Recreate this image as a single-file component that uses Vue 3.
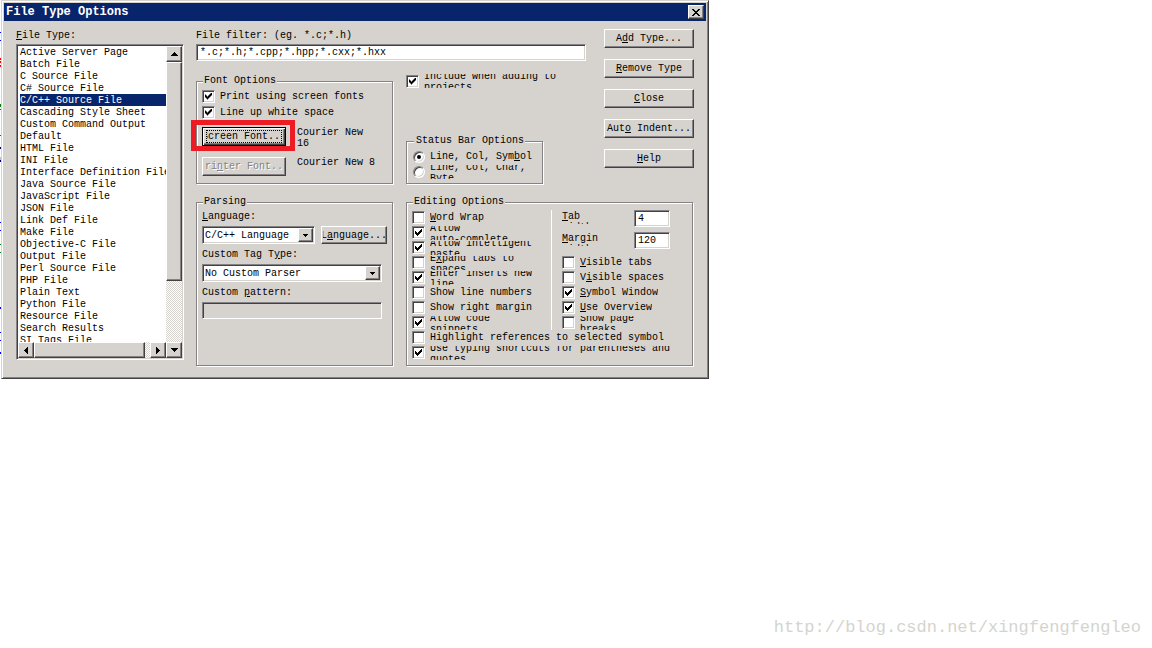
<script setup>
import { h, ref } from 'vue'

// Renders a caption: "&" precedes the access key, "|" breaks the line.
const Caption = ({ text }) =>
  h('span', { class: ['caption', { tall: text.includes('|') }] }, h('span', text.split('|').flatMap((line, i) => {
    const [before, after] = line.split('&')
    const parts = after === undefined ? [before] : [before, h('u', after[0]), after.slice(1)]
    return i ? [h('br'), ...parts] : parts
  })))
Caption.props = ['text']

const fileTypes = [
  'Active Server Page', 'Batch File', 'C Source File', 'C# Source File', 'C/C++ Source File',
  'Cascading Style Sheet', 'Custom Command Output', 'Default', 'HTML File', 'INI File',
  'Interface Definition File', 'Java Source File', 'JavaScript File', 'JSON File', 'Link Def File',
  'Make File', 'Objective-C File', 'Output File', 'Perl Source File', 'PHP File', 'Plain Text',
  'Python File', 'Resource File', 'Search Results', 'SI Tags File'
]
const fileType = ref('C/C++ Source File')
const filter = ref('*.c;*.h;*.cpp;*.hpp;*.cxx;*.hxx')
const language = ref('C/C++ Language')
const parser = ref('No Custom Parser')
const pattern = ref('')
const include = ref(true)
const status = ref('symbol')
const tabWidth = ref('4')
const marginWidth = ref('120')

const commands = ['A&dd Type...', '&Remove Type', '&Close', 'Aut&o Indent...', '&Help']
const fontChecks = ref([
  { text: 'Print using screen fonts', on: true },
  { text: 'Line up white space', on: true }
])
const statusModes = [
  { id: 'symbol', text: 'Line, Col, Sym&bol' },
  { id: 'byte', text: 'Line, Col, Char,|Byte' }
]
const editLeft = ref([
  { text: '&Word Wrap', on: false },
  { text: 'Allow|auto-complete', on: true },
  { text: 'Allow intelligent|paste', on: true },
  { text: 'E&xpand tabs to|spaces', on: false },
  { text: 'Enter inserts new|line', on: true },
  { text: 'Show line numbers', on: false },
  { text: 'Show right margin', on: false },
  { text: 'Allow code|snippets', on: true }
])
const editRight = ref([
  { text: '&Visible tabs', on: false },
  { text: 'V&isible spaces', on: false },
  { text: '&Symbol Window', on: true },
  { text: '&Use Overview', on: true },
  { text: 'Show page|breaks', on: false }
])
const editWide = ref([
  { text: 'Highlight references to selected symbol', on: false },
  { text: 'Use typing shortcuts for parentheses and|quotes', on: true }
])

// Slivers of the editor window that show past the dialog's left edge.
const slivers = [
  [32, 1, '#00f'], [40, 1, '#00f'], [58, 2, '#f00'], [61, 2, '#f00'], [65, 2, '#f00'],
  [104, 3, '#008000'], [109, 1, '#008000'], [135, 1, '#008000'], [147, 2, '#000080'],
  [157, 5, '#c0c0c0'], [160, 2, '#000080'], [222, 1, '#00f'], [230, 1, '#00f'],
  [244, 1, '#008000'], [252, 1, '#008000'], [307, 2, '#00f'], [332, 1, '#00f'],
  [340, 1, '#00f'], [352, 2, '#00f']
]
</script>

<template>
  <div class="page">
    <div class="desk">
      <svg class="slivers" width="1" height="379" aria-hidden="true" shape-rendering="crispEdges">
        <rect v-for="s in slivers" :key="s[0]" x="0" :y="s[0]" width="1" :height="s[1]" :fill="s[2]" />
      </svg>

      <main class="dialog" role="dialog" aria-labelledby="title">
        <header class="titlebar">
          <h1 id="title">File Type Options</h1>
          <button class="btn close" type="button" aria-label="Close window">
            <svg width="8" height="7" viewBox="0 0 8 7" shape-rendering="crispEdges">
              <path d="M0 0h2v1h1v1h2v-1h1v-1h2v1h-1v1h-1v1h-1v1h1v1h1v1h1v1h-2v-1h-1v-1h-2v1h-1v1h-2v-1h1v-1h1v-1h1v-1h-1v-1h-1v-1h-1z" />
            </svg>
          </button>
        </header>

        <div class="body">
          <section class="types">
            <label for="types"><Caption text="&File Type:" /></label>
            <div class="listbox sunken">
              <select id="types" v-model="fileType" size="25">
                <option v-for="t in fileTypes" :key="t" :value="t">{{ t }}</option>
              </select>
              <div class="vbar">
                <button class="btn arrow" type="button" aria-label="Scroll up">
                  <svg width="7" height="4" shape-rendering="crispEdges"><path d="M3 0h1v1h1v1h1v1h1v1h-7v-1h1v-1h1v-1h1z" /></svg>
                </button>
                <div class="btn vthumb"></div>
              </div>
              <div class="hbar">
                <button class="btn arrow" type="button" aria-label="Scroll left">
                  <svg width="4" height="7" shape-rendering="crispEdges"><path d="M4 0v7h-1v-1h-1v-1h-1v-1h-1v-1h1v-1h1v-1h1v-1z" /></svg>
                </button>
                <div class="btn hthumb"></div>
                <button class="btn arrow" type="button" aria-label="Scroll right">
                  <svg width="4" height="7" shape-rendering="crispEdges"><path d="M0 0v7h1v-1h1v-1h1v-1h1v-1h-1v-1h-1v-1h-1v-1z" /></svg>
                </button>
              </div>
              <button class="btn arrow" type="button" aria-label="Scroll down">
                <svg width="7" height="4" shape-rendering="crispEdges"><path d="M0 0h7v1h-1v1h-1v1h-1v1h-1v-1h-1v-1h-1v-1h-1z" /></svg>
              </button>
            </div>
          </section>

          <section class="settings">
            <div class="upper">
              <div class="general">
                <label for="filter">File filter: (eg. *.c;*.h)</label>
                <input id="filter" v-model="filter" class="text sunken" type="text" />
                <div class="pair">
                  <fieldset class="narrow fonts">
                    <legend>Font Options</legend>
                    <label v-for="c in fontChecks" :key="c.text" class="option">
                      <input v-model="c.on" type="checkbox" /><Caption :text="c.text" />
                    </label>
                    <div class="fontrow first">
                      <div class="marked">
                        <button class="btn default" type="button"><span class="clip focus"><Caption text="Screen Font..." /></span></button>
                        <div class="marker"></div>
                      </div>
                      <p>Courier New<br />16</p>
                    </div>
                    <div class="fontrow">
                      <button class="btn" type="button" disabled><span class="clip"><Caption text="Pri&nter Font..." /></span></button>
                      <p>Courier New 8</p>
                    </div>
                  </fieldset>
                  <div class="side">
                    <label class="option">
                      <input v-model="include" type="checkbox" /><Caption text="Include when adding to|projects" />
                    </label>
                    <fieldset class="status">
                      <legend>Status Bar Options</legend>
                      <label v-for="m in statusModes" :key="m.id" class="option">
                        <input v-model="status" type="radio" name="status" :value="m.id" /><Caption :text="m.text" />
                      </label>
                    </fieldset>
                  </div>
                </div>
              </div>
              <div class="commands">
                <button v-for="c in commands" :key="c" class="btn" type="button"><Caption :text="c" /></button>
              </div>
            </div>

            <div class="pair lower">
              <fieldset class="narrow parsing">
                <legend>Parsing</legend>
                <label for="language"><Caption text="&Language:" /></label>
                <div class="row">
                  <div class="combo sunken">
                    <select id="language" v-model="language"><option>C/C++ Language</option></select>
                    <span class="btn drop"><svg width="5" height="3" shape-rendering="crispEdges"><path d="M0 0h5v1h-1v1h-1v1h-1v-1h-1v-1h-1z" /></svg></span>
                  </div>
                  <button class="btn lang" type="button"><span class="clip"><Caption text="L&anguage..." /></span></button>
                </div>
                <label for="parser"><Caption text="Custom Tag T&ype:" /></label>
                <div class="combo wide sunken">
                  <select id="parser" v-model="parser"><option>No Custom Parser</option></select>
                  <span class="btn drop"><svg width="5" height="3" shape-rendering="crispEdges"><path d="M0 0h5v1h-1v1h-1v1h-1v-1h-1v-1h-1z" /></svg></span>
                </div>
                <label for="pattern"><Caption text="Custom &pattern:" /></label>
                <input id="pattern" v-model="pattern" class="text wide sunken" type="text" disabled />
              </fieldset>

              <fieldset class="editing">
                <legend>Editing Options</legend>
                <div class="columns">
                  <div class="left">
                    <label v-for="c in editLeft" :key="c.text" class="option">
                      <input v-model="c.on" type="checkbox" /><Caption :text="c.text" />
                    </label>
                  </div>
                  <div class="right">
                    <div class="measure">
                      <label for="tab"><Caption text="&Tab|width:" /></label>
                      <input id="tab" v-model="tabWidth" class="text sunken" type="text" />
                    </div>
                    <div class="measure">
                      <label for="margin"><Caption text="&Margin|width:" /></label>
                      <input id="margin" v-model="marginWidth" class="text sunken" type="text" />
                    </div>
                    <label v-for="c in editRight" :key="c.text" class="option">
                      <input v-model="c.on" type="checkbox" /><Caption :text="c.text" />
                    </label>
                  </div>
                </div>
                <label v-for="c in editWide" :key="c.text" class="option">
                  <input v-model="c.on" type="checkbox" /><Caption :text="c.text" />
                </label>
              </fieldset>
            </div>
          </section>
        </div>
      </main>
    </div>
    <footer>http://blog.csdn.net/xingfengfengleo</footer>
  </div>
</template>

<style>
body {
  background: #fff;
}
</style>

<style scoped>
* {
  box-sizing: border-box;
}
.page {
  --face: #d6d3ce;
  --navy: #08246b;
  min-height: 100vh;
  display: flex;
  flex-direction: column;
  justify-content: space-between;
  font: 10px/11px "Liberation Mono", monospace;
  color: #000;
}
button, input, select {
  font: inherit;
  color: inherit;
  margin: 0;
  padding: 0;
  border: 0;
  border-radius: 0;
  outline: 0;
}
p, h1 {
  margin: 0;
}
.desk {
  display: flex;
  align-items: flex-start;
}
.slivers {
  flex: none;
}
.dialog {
  width: 100%;
  max-width: 708px;
  padding: 2px;
  background: var(--face);
  border: 1px solid;
  border-color: var(--face) #424142 #424142 var(--face);
  box-shadow: inset 1px 1px #fff, inset -1px -1px #848284;
}
.titlebar {
  display: flex;
  align-items: center;
  justify-content: space-between;
  height: 18px;
  padding: 0 2px;
  background: var(--navy);
  color: #fff;
}
.titlebar h1 {
  font-size: 12px;
  line-height: 18px;
  font-weight: bold;
}
.btn {
  display: flex;
  align-items: center;
  justify-content: center;
  height: 19px;
  background: var(--face);
  color: #000;
  border: 1px solid;
  border-color: #fff #424142 #424142 #fff;
  box-shadow: inset -1px -1px #848284;
  white-space: nowrap;
}
.close {
  width: 16px;
  height: 14px;
}
.sunken {
  background: #fff;
  border: 1px solid;
  border-color: #848284 #fff #fff #848284;
  box-shadow: inset 1px 1px #424142, inset -1px -1px var(--face);
}
.body {
  display: flex;
  gap: 12px;
  padding: 8px 12px 10px;
}
.types {
  flex: none;
  width: 168px;
}
.types > label,
.general > label {
  display: block;
  line-height: 13px;
  margin-bottom: 2px;
}
.listbox {
  display: grid;
  grid-template-columns: 1fr 16px;
  padding: 1px;
}
.listbox select {
  width: 100%;
  min-width: 0;
  height: 296px;
  padding-left: 2px;
  background: transparent;
  overflow: hidden;
  scrollbar-width: none;
}
.listbox option {
  padding: 1px 0 0;
  height: 12px;
  min-height: 12px;
  line-height: 12px;
  color: #000;
}
.listbox option:checked {
  background: linear-gradient(var(--navy), var(--navy));
  color: #fff !important;
}
.vbar, .hbar {
  display: flex;
  background: repeating-conic-gradient(#fff 0 25%, var(--face) 0 50%) 0 0 / 2px 2px;
}
.vbar {
  flex-direction: column;
}
.hbar {
  justify-content: space-between;
}
.arrow {
  flex: none;
  width: 16px;
  height: 16px;
}
.vthumb {
  height: 219px;
}
.hthumb {
  flex: 1;
  height: 16px;
  margin-right: 5px;
}
.settings {
  flex: 1;
  min-width: 0;
}
.upper {
  display: flex;
  gap: 18px;
}
.general {
  flex: 1;
}
.text {
  display: block;
  width: 100%;
  height: 17px;
  padding: 0 3px;
}
.text:disabled {
  background: var(--face);
}
.pair {
  display: flex;
  gap: 13px;
}
.general .pair {
  margin-top: 14px;
}
.lower {
  margin-top: 12px;
}
fieldset {
  min-width: 0;
  margin: 0;
  padding: 2px 5px 5px;
  border: 1px solid #848284;
  box-shadow: 1px 1px #fff, inset 1px 1px #fff;
}
legend {
  margin-left: 1px;
  padding: 0 1px;
  line-height: 12px;
  background: var(--face);
}
.narrow {
  flex: none;
  width: 197px;
}
.option {
  display: flex;
  align-items: center;
  gap: 5px;
  height: 15px;
}
.option > .caption {
  display: flex;
  align-items: center;
  height: 14px;
  overflow: hidden;
  white-space: nowrap;
}
.option > .tall {
  padding-top: 2px;
}
.option input {
  flex: none;
  appearance: none;
  width: 13px;
  height: 13px;
  padding: 2px;
  background: #fff;
  border: 1px solid;
  border-color: #848284 #fff #fff #848284;
  box-shadow: inset 1px 1px #424142, inset -1px -1px var(--face);
}
.option input[type="radio"] {
  width: 12px;
  height: 12px;
  border-radius: 50%;
}
.option input:checked::before {
  content: "";
  display: block;
  width: 7px;
  height: 7px;
  background: #000;
  clip-path: polygon(0 2px, 1px 2px, 1px 3px, 2px 3px, 2px 4px, 3px 4px, 3px 3px, 4px 3px, 4px 2px, 5px 2px, 5px 1px, 6px 1px, 6px 0, 7px 0, 7px 3px, 6px 3px, 6px 4px, 5px 4px, 5px 5px, 4px 5px, 4px 6px, 3px 6px, 3px 7px, 2px 7px, 2px 6px, 1px 6px, 1px 5px, 0 5px);
}
.option input[type="radio"]:checked::before {
  width: 4px;
  height: 4px;
  margin: 1px;
  border-radius: 50%;
  clip-path: none;
}
.fonts {
  padding: 1px 5px 7px;
}
.fonts .option {
  height: 16px;
}
.fontrow {
  display: flex;
  align-items: flex-start;
  gap: 11px;
}
.fontrow.first {
  height: 30px;
  margin-top: 7px;
}
.fontrow .btn {
  width: 84px;
}
.clip {
  display: flex;
  justify-content: center;
  flex: none;
  width: calc(100% - 6px);
  overflow: hidden;
}
.default {
  border-color: #000;
  box-shadow: inset 1px 1px #fff, inset -1px -1px #424142, inset -2px -2px #848284;
}
.focus {
  border: 1px dotted #000;
}
.btn:disabled {
  color: #848284;
  text-shadow: 1px 1px #fff;
}
.marked {
  position: relative;
}
.marker {
  position: absolute;
  inset: -7px -9px -5px -11px;
  border: 5px solid #ed1c24;
  pointer-events: none;
}
.side {
  flex: 1;
  display: flex;
  flex-direction: column;
  justify-content: space-between;
  align-items: flex-start;
}
.side > .option {
  height: 12px;
}
.status {
  width: 137px;
  padding: 2px 6px 4px;
}
.status legend {
  padding-left: 2px;
}
.commands {
  flex: none;
  width: 90px;
  display: flex;
  flex-direction: column;
  gap: 11px;
}
.parsing > label {
  display: block;
  margin: 5px 0 4px;
}
.parsing > legend + label {
  margin-top: 1px;
}
.row {
  display: flex;
  gap: 6px;
}
.combo {
  position: relative;
  width: 113px;
  height: 18px;
}
.combo select {
  appearance: none;
  display: block;
  width: 100%;
  height: 16px;
  padding: 0 16px 0 2px;
  background: transparent;
}
.drop {
  position: absolute;
  top: 1px;
  right: 1px;
  width: 15px;
  height: 14px;
  pointer-events: none;
}
.combo.wide,
.wide {
  width: 180px;
}
.lang {
  width: 66px;
  height: 18px;
}
.lang .clip {
  width: calc(100% - 2px);
}
.editing {
  flex: 1;
  margin-right: 1px;
}
.columns {
  display: flex;
}
.left {
  width: 140px;
  border-right: 1px solid #fff;
}
.right {
  flex: 1;
  padding-left: 10px;
}
.measure {
  display: flex;
  margin-bottom: 5px;
}
.measure label {
  width: 72px;
  height: 14px;
  padding-top: 1px;
  overflow: hidden;
}
.measure .text {
  width: 36px;
}
.measure + .option {
  margin-top: 6px;
}
footer {
  padding: 0 11px 9px 0;
  text-align: right;
  font-size: 17px;
  line-height: 22px;
  color: #d4d4ce;
}
</style>
